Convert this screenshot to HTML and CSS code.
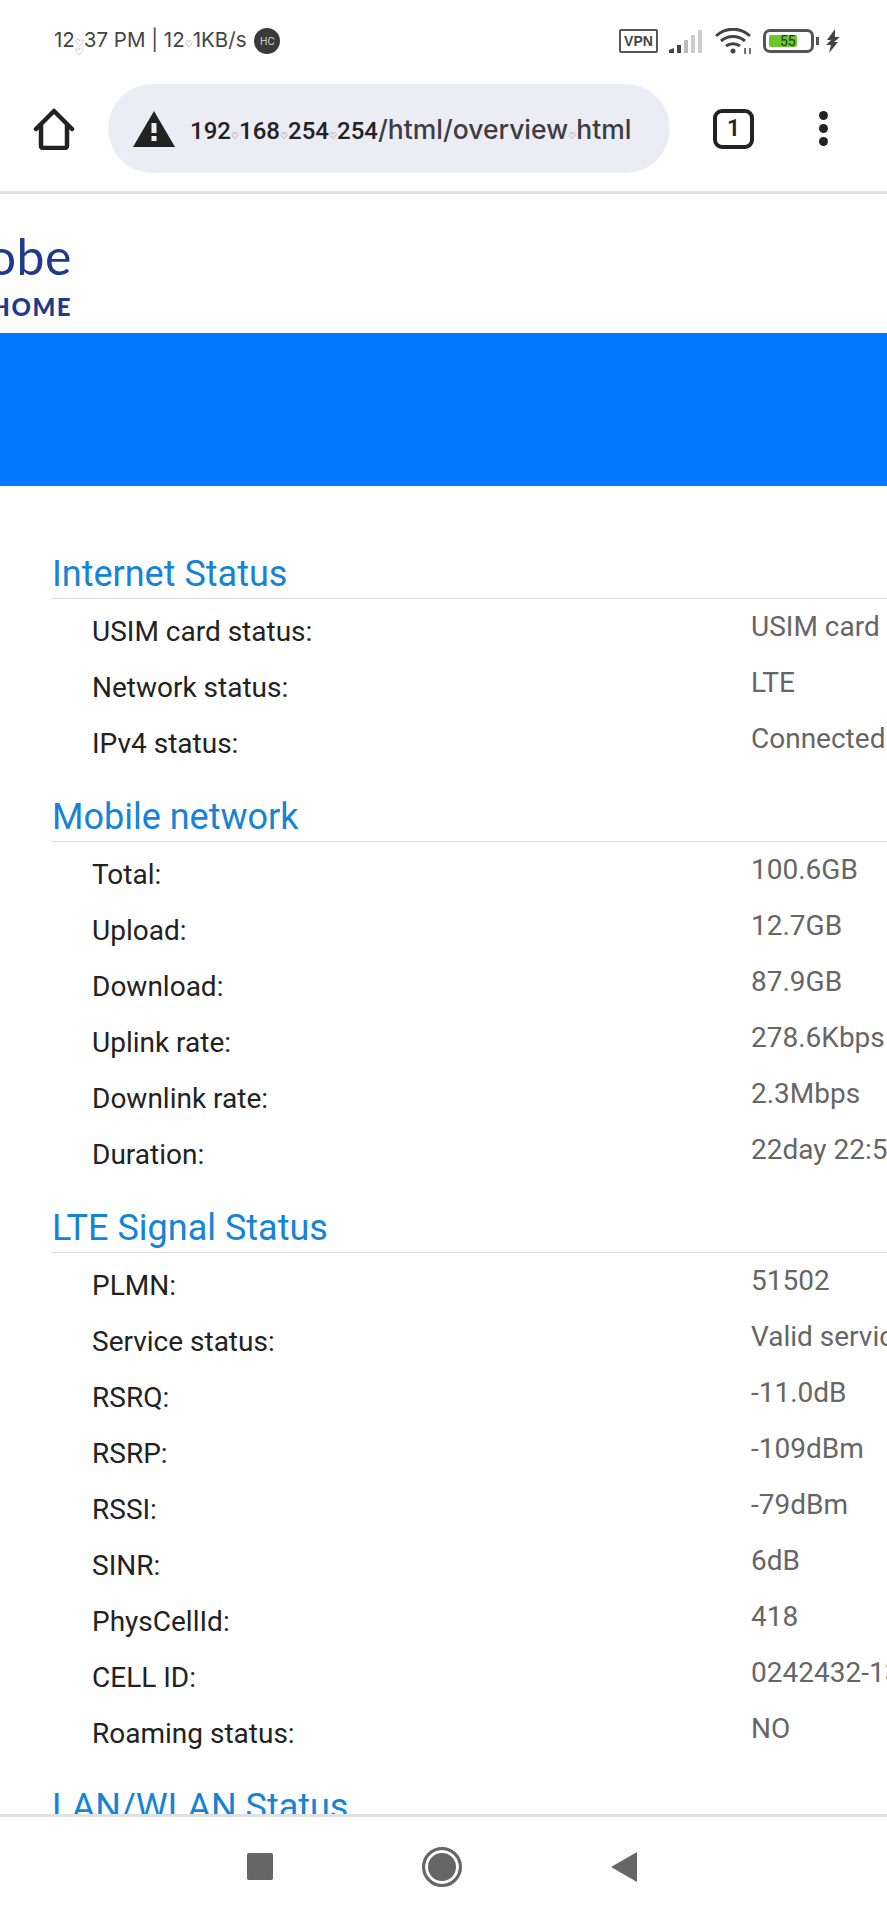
FILE: index.html
```html
<!DOCTYPE html>
<html lang="en">
<head>
<meta charset="utf-8">
<title>Overview</title>
<link rel="stylesheet" href="styles.css">
</head>
<body>
<div class="phone">
  <header class="status">
    <div class="status-left">
      <span>12<span class="colon"><i>♡</i><i>♡</i></span>37 PM | 12<span class="dot">♡</span>1KB/s</span>
      <span class="badge">HC</span>
    </div>
    <div class="status-right">
      <span class="vpn">VPN</span>
      <svg class="sig" width="35" height="25" viewBox="0 0 35 25">
        <path d="M1 24v-3l5-2v5z" fill="#444"/><path d="M9 24v-8h4v8z" fill="#444"/>
        <path d="M16 24V11h4v13z" fill="#bbb"/><path d="M23 24V6h4v18z" fill="#ccc"/><path d="M30 24V1h4v23z" fill="#ccc"/>
      </svg>
      <svg class="wifi" width="37" height="26" viewBox="0 0 37 26" fill="none" stroke="#444" stroke-width="3">
        <path d="M1 8c10-9 24-9 34 0"/><path d="M6 13c7-6 17-6 24 0"/><path d="M11 18c4-3 10-3 14 0"/>
        <circle cx="18" cy="23" r="2.5" fill="#444" stroke="none"/>
        <path d="M30 20v6M35 20v6" stroke-width="1.5"/>
      </svg>
      <div class="battery"><div class="charge"></div><span class="level">55</span></div>
      <span class="nub"></span>
      <svg class="bolt" width="14" height="24" viewBox="0 0 14 24"><path d="M9 0 1 11h4l-5 5h5l-2 8 9-11H8l6-5H9z" fill="#444"/></svg>
    </div>
  </header>

  <nav class="toolbar">
    <svg class="home" width="42" height="42" viewBox="0 0 42 42" fill="none" stroke="#222" stroke-width="4.5" stroke-linejoin="round" stroke-linecap="round">
      <path d="M3 21 21 3l18 18"/><path d="M8 17v21a2 2 0 0 0 2 2h22a2 2 0 0 0 2-2V17"/>
    </svg>
    <div class="pill">
      <svg class="warn" width="42" height="36" viewBox="0 0 42 36">
        <path d="M21 0 42 36H0z" fill="#222"/><rect x="18.500" y="12" width="5" height="10" fill="#ecedf4"/><rect x="18.500" y="25" width="5" height="5" fill="#ecedf4"/>
      </svg>
      <span class="url"><b>192<i>♡</i>168<i>♡</i>254<i>♡</i>254</b>/html/overview<i>♡</i>html</span>
    </div>
    <div class="tabs">1</div>
    <div class="menu"><span></span><span></span><span></span></div>
  </nav>

  <main class="content">
    <div class="logo">
      <span class="logo-name">Globe</span>
      <span class="logo-sub">AT HOME</span>
    </div>
    <div class="band"></div>

    <section class="group first">
      <h2>Internet Status</h2>
      <div class="row"><span class="label">USIM card status:</span><span class="value">USIM card</span></div>
      <div class="row"><span class="label">Network status:</span><span class="value">LTE</span></div>
      <div class="row"><span class="label">IPv4 status:</span><span class="value">Connected</span></div>
    </section>

    <section class="group">
      <h2>Mobile network</h2>
      <div class="row"><span class="label">Total:</span><span class="value">100.6GB</span></div>
      <div class="row"><span class="label">Upload:</span><span class="value">12.7GB</span></div>
      <div class="row"><span class="label">Download:</span><span class="value">87.9GB</span></div>
      <div class="row"><span class="label">Uplink rate:</span><span class="value">278.6Kbps</span></div>
      <div class="row"><span class="label">Downlink rate:</span><span class="value">2.3Mbps</span></div>
      <div class="row"><span class="label">Duration:</span><span class="value">22day 22:58:10</span></div>
    </section>

    <section class="group">
      <h2>LTE Signal Status</h2>
      <div class="row"><span class="label">PLMN:</span><span class="value">51502</span></div>
      <div class="row"><span class="label">Service status:</span><span class="value">Valid service</span></div>
      <div class="row"><span class="label">RSRQ:</span><span class="value">-11.0dB</span></div>
      <div class="row"><span class="label">RSRP:</span><span class="value">-109dBm</span></div>
      <div class="row"><span class="label">RSSI:</span><span class="value">-79dBm</span></div>
      <div class="row"><span class="label">SINR:</span><span class="value">6dB</span></div>
      <div class="row"><span class="label">PhysCellId:</span><span class="value">418</span></div>
      <div class="row"><span class="label">CELL ID:</span><span class="value">0242432-13</span></div>
      <div class="row"><span class="label">Roaming status:</span><span class="value">NO</span></div>
    </section>

    <section class="group">
      <h2>LAN/WLAN Status</h2>
    </section>
  </main>

  <footer class="navbar">
    <span class="nav-square"></span>
    <span class="nav-circle"></span>
    <svg width="26" height="30" viewBox="0 0 26 30"><path d="M26 0v30L0 15z" fill="#666"/></svg>
  </footer>
</div>
</body>
</html>
```

FILE: styles.css
```css
* { box-sizing: border-box; }
html, body { margin: 0; padding: 0; background: #fff; }
body { font-family: Roboto, "Liberation Sans", sans-serif; }

.phone {
  width: 887px;
  height: 1920px;
  display: flex;
  flex-direction: column;
  overflow: hidden;
}

/* status bar */
.status {
  height: 82px;
  flex: none;
  display: flex;
  justify-content: space-between;
  align-items: center;
  padding: 0 47px 0 54px;
  color: #444;
  font-family: Inter, Roboto, sans-serif;
  font-size: 20.500px;
}
.status-left { display: flex; align-items: center; gap: 8px; white-space: nowrap; }
.colon { display: inline-flex; flex-direction: column; vertical-align: 1px; }
.colon i { font: normal 10px/9px "DejaVu Sans", sans-serif; }
.dot { font: 9px/1 "DejaVu Sans", sans-serif; }
.badge {
  width: 26px; height: 26px; border-radius: 50%;
  background: #3a3a3a; color: #ddd;
  font-size: 10px; display: flex; align-items: center; justify-content: center;
}
.status-right { display: flex; align-items: center; }
.vpn {
  width: 39px; height: 24px; border: 2px solid #555; border-radius: 2px;
  font: 600 14px/20px "Liberation Sans", sans-serif; text-align: center; color: #444;
  margin-right: 10px;
}
.sig { margin-right: 12px; }
.wifi { margin-right: 11px; }
.battery {
  position: relative;
  width: 51px; height: 24px; border: 3px solid #555; border-radius: 7px;
  padding: 3px; display: flex; align-items: center;
}
.charge { width: 28px; height: 100%; background: #6cc72f; border-radius: 2px; }
.level { position: absolute; left: 14px; top: 0; font: 14px/18px Roboto, sans-serif; color: #1f3a1a; }
.nub { width: 3px; height: 8px; background: #555; margin: 0 7px 0 2px; }

/* browser toolbar */
.toolbar {
  height: 112px;
  flex: none;
  display: flex;
  align-items: center;
  padding: 0 0 16px 33px;
  border-bottom: 3px solid #e2e2e2;
}
.home { flex: none; margin-right: 33px; }
.pill {
  width: 562px; height: 89px; border-radius: 45px;
  background: #ecedf4;
  display: flex; align-items: center; gap: 15px;
  padding-left: 25px;
  flex: none;
}
.warn { flex: none; }
.url {
  font-family: Inter, Roboto, sans-serif;
  font-size: 26.500px;
  font-weight: 500;
  color: #3c3c44;
  white-space: nowrap;
}
.url b { color: #222; font: 500 24px Roboto, sans-serif; }
.url i { font: normal 9px/1 "DejaVu Sans", sans-serif; color: #333; }
.tabs {
  width: 41px; height: 40px; margin-left: 43px; flex: none;
  border: 4.500px solid #222; border-radius: 9px;
  font: 600 23px/31px Roboto, sans-serif; text-align: center; color: #222;
}
.menu { display: flex; flex-direction: column; gap: 4px; margin-left: 65px; }
.menu span { width: 9px; height: 9px; border-radius: 50%; background: #222; }

/* page */
.content { flex: 1; min-height: 0; overflow: hidden; }
.logo {
  width: 72px; height: 139px;
  overflow: hidden;
  display: flex; flex-direction: column; align-items: flex-end;
  white-space: nowrap;
  color: #1f3a8a;
  font-family: Lato, sans-serif;
  padding-top: 33px;
}
.logo-name { font-size: 50px; line-height: 58px; letter-spacing: .5px; }
.logo-sub { font-size: 24px; line-height: 28px; font-weight: 900; letter-spacing: 1.500px; margin-top: 8px; }
.band { height: 153px; background: #007bff; }

.group { padding-left: 52px; margin-top: 26px; }
.group.first { margin-top: 68px; }
h2 {
  margin: 0 0 4px;
  height: 45px;
  font-size: 36px;
  line-height: 41px;
  font-weight: 400;
  color: #1583d6;
  border-bottom: 1px solid #ddd;
  white-space: nowrap;
}
.row {
  display: grid;
  grid-template-columns: 659px 1fr;
  padding-left: 40px;
  height: 56px;
  align-items: center;
  font-size: 28px;
  white-space: nowrap;
}
.label { color: #222; }
.value { color: #666; padding-bottom: 10px; }

/* system navigation */
.navbar {
  height: 106px;
  flex: none;
  background: #fff;
  border-top: 3px solid #e0e0e0;
  display: flex;
  align-items: center;
  padding: 0 250px 4px 247px;
  justify-content: space-between;
}
.nav-square { width: 26px; height: 27px; background: #666; border-radius: 2px; }
.nav-circle {
  width: 40px; height: 40px; border-radius: 50%;
  background: #666;
  border: 3px solid #666;
  box-shadow: inset 0 0 0 3px #fff;
}
```
